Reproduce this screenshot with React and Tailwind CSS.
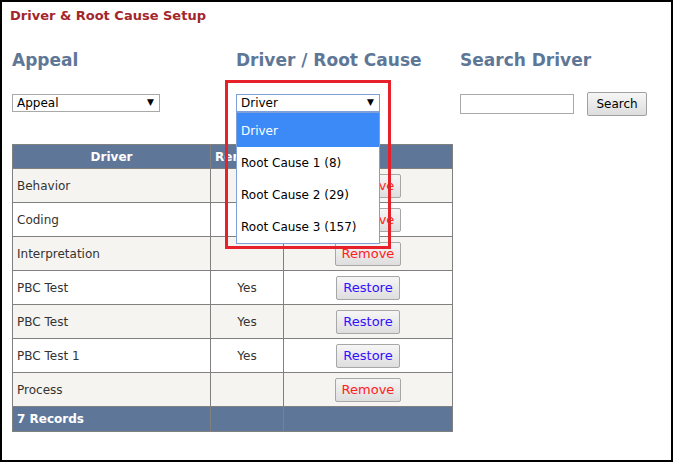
import React from 'react';

const rows = [
  { name: 'Behavior', removed: '', action: 'Remove' },
  { name: 'Coding', removed: '', action: 'Remove' },
  { name: 'Interpretation', removed: '', action: 'Remove' },
  { name: 'PBC Test', removed: 'Yes', action: 'Restore' },
  { name: 'PBC Test', removed: 'Yes', action: 'Restore' },
  { name: 'PBC Test 1', removed: 'Yes', action: 'Restore' },
  { name: 'Process', removed: '', action: 'Remove' },
];

const options = ['Root Cause 1 (8)', 'Root Cause 2 (29)', 'Root Cause 3 (157)'];

function ActionButton({ label }) {
  const color = label === 'Remove' ? 'text-[#ff2020]' : 'text-[#3010ff]';
  return (
    <button className={`h-[24px] px-[6px] border border-[#a7a7a7] rounded-[2px] bg-gradient-to-b from-[#f6f6f6] to-[#dedede] text-[13px] leading-none ${color}`}>
      {label}
    </button>
  );
}

export default function App() {
  return (
    <div className="w-[675px] h-[464px] bg-white" style={{ fontFamily: '"DejaVu Sans", Verdana, sans-serif' }}>
      <div className="relative w-[673px] h-[462px] border-2 border-black">
        <h1 className="pl-[8px] pt-[6px] text-[13px] font-bold text-[#a3262c] leading-[16px]">Driver &amp; Root Cause Setup</h1>

        <div className="grid grid-cols-[224px_224px_1fr] pl-[10px] mt-[26px]">
          <h2 className="text-[17px] font-bold text-[#5e7797] leading-[20px]">Appeal</h2>
          <h2 className="text-[17px] font-bold text-[#5e7797] leading-[20px]">Driver / Root Cause</h2>
          <h2 className="text-[17px] font-bold text-[#5e7797] leading-[20px]">Search Driver</h2>

          <div className="mt-[24px]">
            <div className="w-[148px] h-[18px] border border-[#a9a9a9] flex items-center justify-between pl-[4px] pr-[5px] text-[12px] text-black">
              <span>Appeal</span>
              <span className="text-[9px]">▼</span>
            </div>
          </div>
          <div className="mt-[24px]">
            <div className="w-[144px] h-[18px] border border-[#7f9fd8] flex items-center justify-between pl-[4px] pr-[5px] text-[12px] text-black">
              <span>Driver</span>
              <span className="text-[9px]">▼</span>
            </div>
          </div>
          <div className="mt-[22px] flex items-center gap-[13px]">
            <div className="w-[114px] h-[20px] border border-[#a9a9a9]" />
            <button className="h-[24px] w-[60px] border border-[#a0a0a0] rounded-[2px] bg-gradient-to-b from-[#f6f6f6] to-[#dddddd] text-[12px] text-black">Search</button>
          </div>
        </div>

        <table className="ml-[10px] mt-[28px] border-collapse text-[12px] text-[#333333]">
          <thead>
            <tr className="bg-[#5e7799] text-white h-[24px]">
              <th className="w-[198px] border border-[#808080] font-bold text-center">Driver</th>
              <th className="w-[73px] border border-[#808080] font-bold text-left pl-[4px]">Removed</th>
              <th className="w-[169px] border border-[#808080]"></th>
            </tr>
          </thead>
          <tbody>
            {rows.map((r, i) => (
              <tr key={i} className={`h-[34px] ${i % 2 === 0 ? 'bg-[#f5f4f0]' : 'bg-white'}`}>
                <td className="border border-[#808080] pl-[4px]">{r.name}</td>
                <td className="border border-[#808080] text-center">{r.removed}</td>
                <td className="border border-[#808080] text-center"><ActionButton label={r.action} /></td>
              </tr>
            ))}
            <tr className="bg-[#5e7799] text-white h-[25px]">
              <td className="border border-[#808080] pl-[4px] font-bold">7 Records</td>
              <td className="border border-[#808080]"></td>
              <td className="border border-[#808080]"></td>
            </tr>
          </tbody>
        </table>

        {/* open dropdown list */}
        <div className="absolute left-[234px] top-[110px] w-[144px] border border-[#7f9fd8] bg-white text-[12px] text-black">
          <div className="h-[34px] bg-[#3c8af7] text-white flex items-center pl-[4px] pt-[1px]">Driver</div>
          {options.map(o => (
            <div key={o} className="h-[32px] flex items-center pl-[4px]">{o}</div>
          ))}
        </div>

        {/* highlight box */}
        <div className="absolute left-[223px] top-[78px] w-[166px] h-[169px] border-[3px] border-[#e8202a]" />
      </div>
    </div>
  );
}
